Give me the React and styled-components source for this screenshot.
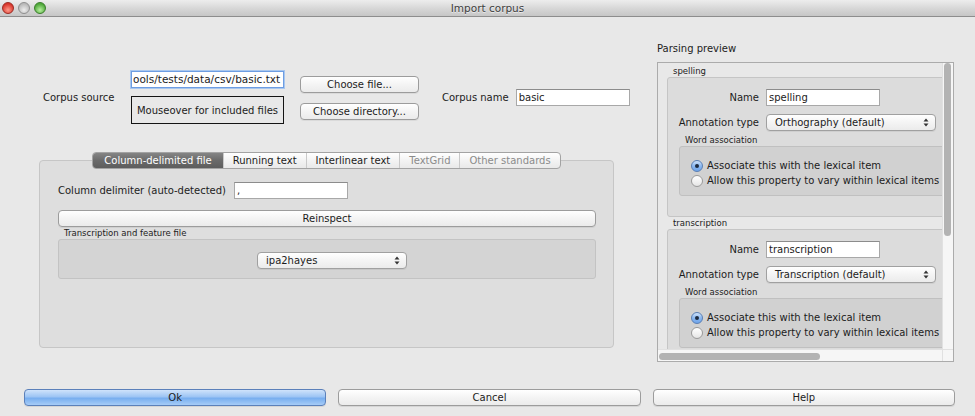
import styled, { createGlobalStyle } from "styled-components";

const GlobalStyle = createGlobalStyle`
  html, body {
    margin: 0;
    padding: 0;
    background: #e8e8e8;
  }
  body {
    font-family: "DejaVu Sans", "Liberation Sans", sans-serif;
    font-size: 10px;
    color: #1c1c1c;
  }
  * {
    box-sizing: border-box;
  }
`;

const Window = styled.div`
  width: 975px;
  height: 416px;
  background: #e8e8e8;
  display: flex;
  flex-direction: column;
  overflow: hidden;
`;

const TitleBar = styled.div`
  flex: none;
  height: 17px;
  display: grid;
  grid-template-columns: 1fr auto 1fr;
  align-items: center;
  background: linear-gradient(#ededed, #d6d6d6 55%, #c6c6c6);
  border-bottom: 1px solid #8d8d8d;
`;

const Lights = styled.div`
  display: flex;
  gap: 4px;
  padding-left: 2px;
`;

const Light = styled.span`
  width: 12px;
  height: 12px;
  border-radius: 50%;
  border: 1px solid ${(p) => p.$edge};
  background: radial-gradient(circle at 50% 70%, ${(p) => p.$light} 0%, ${(p) => p.$base} 70%);
`;

const WindowTitle = styled.div`
  font-size: 10.5px;
  color: #3e3e3e;
  text-shadow: 0 1px 0 rgba(255, 255, 255, 0.6);
`;

const Main = styled.div`
  flex: none;
  height: 372px;
  display: flex;
`;

const LeftCol = styled.div`
  width: 640px;
  padding-left: 39px;
  display: flex;
  flex-direction: column;
`;

const TopRow = styled.div`
  margin-top: 54px;
  height: 53px;
  padding-left: 4px;
  display: flex;
  align-items: center;
`;

const FieldLabel = styled.div`
  width: ${(p) => p.$w || "auto"};
  margin-left: ${(p) => p.$ml || 0};
  white-space: nowrap;
`;

const SourceCol = styled.div`
  width: 153px;
  display: flex;
  flex-direction: column;
  gap: 8px;
`;

const PathInput = styled.div`
  height: 17px;
  background: #fff;
  border: 1px solid #6d9de2;
  box-shadow: 0 0 0 1px #a8c7ef;
  padding: 0 1px;
  font-size: 10.5px;
  line-height: 15px;
  white-space: nowrap;
  overflow: hidden;
`;

const FilesBox = styled.div`
  height: 28px;
  border: 1px solid #141414;
  display: flex;
  align-items: center;
  justify-content: center;
  white-space: nowrap;
`;

const ButtonCol = styled.div`
  margin-left: 16px;
  width: 119px;
  display: flex;
  flex-direction: column;
  gap: 10px;
`;

const PushButton = styled.div`
  height: 17px;
  width: ${(p) => p.$w || "auto"};
  margin-top: ${(p) => p.$mt || 0};
  border: 1px solid #9c9c9c;
  border-radius: 4px;
  background: linear-gradient(#ffffff, #f4f4f4 50%, #ebebeb);
  box-shadow: 0 1px 0 rgba(0, 0, 0, 0.06);
  display: flex;
  align-items: center;
  justify-content: center;
  white-space: nowrap;
`;

const TextField = styled.div`
  width: ${(p) => p.$w};
  height: 17px;
  margin-left: ${(p) => p.$ml || 0};
  background: #fff;
  border: 1px solid #a8a8a8;
  border-top-color: #8c8c8c;
  padding: 0 2px;
  line-height: 15px;
  white-space: nowrap;
  overflow: hidden;
`;

const TabWidget = styled.div`
  margin-top: 28px;
  width: 575px;
  display: flex;
  flex-direction: column;
  align-items: center;
`;

const TabBar = styled.div`
  position: relative;
  z-index: 1;
  height: 17px;
  display: flex;
  border: 1px solid #a3a3a3;
  border-radius: 4px;
  overflow: hidden;
  background: linear-gradient(#ffffff, #f3f3f3 50%, #e9e9e9);
`;

const Tab = styled.div`
  padding: 0 ${(p) => (p.$active ? "11px" : "9px")};
  display: flex;
  align-items: center;
  white-space: nowrap;
  color: ${(p) => (p.$active ? "#fff" : p.$disabled ? "#8b8b8b" : "#1c1c1c")};
  background: ${(p) =>
    p.$active ? "linear-gradient(#858585, #6a6a6a 50%, #5d5d5d)" : "transparent"};
  & + & {
    border-left: 1px solid #c9c9c9;
  }
`;

const TabPanel = styled.div`
  margin-top: -9px;
  width: 100%;
  height: 188px;
  border: 1px solid #c6c6c6;
  border-radius: 4px;
  background: #dedede;
  padding: 21px 17px 0 18px;
`;

const DelimRow = styled.div`
  height: 17px;
  display: flex;
  align-items: center;
  gap: 8px;
`;

const GroupTitle = styled.div`
  font-size: 8.5px;
  line-height: ${(p) => p.$lh || "11px"};
  padding-left: ${(p) => p.$pl || "6px"};
  margin-top: ${(p) => p.$mt || 0};
  white-space: nowrap;
`;

const FileGroup = styled.div`
  height: 40px;
  background: #d4d4d4;
  border: 1px solid #c3c3c3;
  border-radius: 3px;
  display: flex;
  justify-content: center;
  padding: 12px 0 0 10px;
`;

const Combo = styled.div`
  width: ${(p) => p.$w};
  height: 17px;
  border: 1px solid #a0a0a0;
  border-radius: 4px;
  background: linear-gradient(#ffffff, #f4f4f4 50%, #ebebeb);
  box-shadow: 0 1px 0 rgba(0, 0, 0, 0.06);
  display: flex;
  align-items: center;
  justify-content: space-between;
  padding: 0 6px 0 ${(p) => p.$pl || "8px"};
  white-space: nowrap;
`;

const RightCol = styled.div`
  margin-left: 17px;
  width: 297px;
  display: flex;
  flex-direction: column;
`;

const PreviewTitle = styled.div`
  margin-top: 25px;
  line-height: 14px;
  margin-bottom: 6px;
`;

const ScrollArea = styled.div`
  height: 300px;
  border: 1px solid #ababab;
  background: #e8e8e8;
  display: grid;
  grid-template-columns: 1fr 11px;
  grid-template-rows: 1fr 12px;
`;

const Viewport = styled.div`
  overflow: hidden;
  padding: 3px 0 0 9px;
`;

const Section = styled.div`
  width: 300px;
  margin-bottom: 1px;
  background: #dcdcdc;
  border: 1px solid #c5c5c5;
  border-radius: 3px;
  padding: 11px 0 20px 11px;
`;

const FormGrid = styled.div`
  display: grid;
  grid-template-columns: 80px auto;
  column-gap: 7px;
  row-gap: 8px;
  align-items: center;
  justify-items: start;
`;

const FormLabel = styled.div`
  justify-self: end;
  white-space: nowrap;
`;

const RadioGroup = styled.div`
  height: 50px;
  background: #d1d1d1;
  border: 1px solid #c0c0c0;
  border-radius: 3px;
  padding: 11px 0 0 11px;
`;

const RadioRow = styled.div`
  height: 15px;
  display: flex;
  align-items: center;
  gap: 4px;
  white-space: nowrap;
`;

const RadioDot = styled.span`
  flex: none;
  width: 12px;
  height: 12px;
  border-radius: 50%;
  display: flex;
  align-items: center;
  justify-content: center;
  border: 1px solid ${(p) => (p.$on ? "#5a7fb4" : "#9a9a9a")};
  background: ${(p) =>
    p.$on
      ? "linear-gradient(#cfe2fa, #8bb8f0 50%, #6fa4ea)"
      : "linear-gradient(#ffffff, #f0f0f0 60%, #e4e4e4)"};
  &::after {
    content: "";
    width: 4px;
    height: 4px;
    border-radius: 50%;
    background: #1d2b40;
    display: ${(p) => (p.$on ? "block" : "none")};
  }
`;

const VTrack = styled.div`
  background: #f6f6f6;
  border-left: 1px solid #e1e1e1;
  padding: 0 0 0 1px;
`;

const VThumb = styled.div`
  width: 7px;
  height: 173px;
  border-radius: 4px;
  background: #b3b3b3;
`;

const HTrack = styled.div`
  background: #f6f6f6;
  border-top: 1px solid #e1e1e1;
  padding: 3px 0 0 1px;
`;

const HThumb = styled.div`
  width: 161px;
  height: 7px;
  border-radius: 4px;
  background: #b3b3b3;
`;

const Corner = styled.div`
  background: #f6f6f6;
  border-left: 1px solid #e1e1e1;
  border-top: 1px solid #e1e1e1;
`;

const Footer = styled.div`
  flex: none;
  height: 17px;
  display: flex;
  gap: 12px;
  padding: 0 20px 0 24px;
`;

const DialogButton = styled.div`
  flex: 1;
  height: 17px;
  border-radius: 4px;
  border: 1px solid ${(p) => (p.$primary ? "#5b80ba" : "#9c9c9c")};
  background: ${(p) =>
    p.$primary
      ? "linear-gradient(#cfe3fb, #9dc4f4 45%, #78aeef 55%, #a6ccf7)"
      : "linear-gradient(#ffffff, #f4f4f4 50%, #ebebeb)"};
  box-shadow: 0 1px 0 rgba(0, 0, 0, 0.08);
  display: flex;
  align-items: center;
  justify-content: center;
`;

const Arrows = () => (
  <svg width="6" height="9" viewBox="0 0 6 9">
    <path d="M3 0.5 L5.5 3.5 L0.5 3.5 Z" fill="#333" />
    <path d="M3 8.5 L5.5 5.5 L0.5 5.5 Z" fill="#333" />
  </svg>
);

const ParseSection = ({ name, type }) => (
  <>
    <GroupTitle>{name}</GroupTitle>
    <Section>
      <FormGrid>
        <FormLabel>Name</FormLabel>
        <TextField $w="114px">{name}</TextField>
        <FormLabel>Annotation type</FormLabel>
        <Combo $w="170px">
          {type}
          <Arrows />
        </Combo>
      </FormGrid>
      <GroupTitle $mt="3px" $lh="12px">
        Word association
      </GroupTitle>
      <RadioGroup>
        <RadioRow>
          <RadioDot $on />
          Associate this with the lexical item
        </RadioRow>
        <RadioRow>
          <RadioDot />
          Allow this property to vary within lexical items
        </RadioRow>
      </RadioGroup>
    </Section>
  </>
);

const tabs = [
  { label: "Column-delimited file", active: true },
  { label: "Running text" },
  { label: "Interlinear text" },
  { label: "TextGrid", disabled: true },
  { label: "Other standards", disabled: true },
];

const App = () => (
  <Window>
    <GlobalStyle />
    <TitleBar>
      <Lights>
        <Light $base="#d8362c" $light="#ff9a8a" $edge="#9c2a22" />
        <Light $base="#b9b9b9" $light="#ededed" $edge="#8f8f8f" />
        <Light $base="#4fa83a" $light="#b8f0a0" $edge="#3a7d2b" />
      </Lights>
      <WindowTitle>Import corpus</WindowTitle>
      <div />
    </TitleBar>
    <Main>
      <LeftCol>
        <TopRow>
          <FieldLabel $w="88px">Corpus source</FieldLabel>
          <SourceCol>
            <PathInput>ools/tests/data/csv/basic.txt</PathInput>
            <FilesBox>Mouseover for included files</FilesBox>
          </SourceCol>
          <ButtonCol>
            <PushButton>Choose file...</PushButton>
            <PushButton>Choose directory...</PushButton>
          </ButtonCol>
          <FieldLabel $ml="23px">Corpus name</FieldLabel>
          <TextField $w="114px" $ml="7px">
            basic
          </TextField>
        </TopRow>
        <TabWidget>
          <TabBar>
            {tabs.map((t) => (
              <Tab key={t.label} $active={t.active} $disabled={t.disabled}>
                {t.label}
              </Tab>
            ))}
          </TabBar>
          <TabPanel>
            <DelimRow>
              <FieldLabel>Column delimiter (auto-detected)</FieldLabel>
              <TextField $w="114px">,</TextField>
            </DelimRow>
            <PushButton $mt="11px">Reinspect</PushButton>
            <GroupTitle $mt="1px">Transcription and feature file</GroupTitle>
            <FileGroup>
              <Combo $w="150px">
                ipa2hayes
                <Arrows />
              </Combo>
            </FileGroup>
          </TabPanel>
        </TabWidget>
      </LeftCol>
      <RightCol>
        <PreviewTitle>Parsing preview</PreviewTitle>
        <ScrollArea>
          <Viewport>
            <ParseSection name="spelling" type="Orthography (default)" />
            <ParseSection name="transcription" type="Transcription (default)" />
          </Viewport>
          <VTrack>
            <VThumb />
          </VTrack>
          <HTrack>
            <HThumb />
          </HTrack>
          <Corner />
        </ScrollArea>
      </RightCol>
    </Main>
    <Footer>
      <DialogButton $primary>Ok</DialogButton>
      <DialogButton>Cancel</DialogButton>
      <DialogButton>Help</DialogButton>
    </Footer>
  </Window>
);

export default App;
